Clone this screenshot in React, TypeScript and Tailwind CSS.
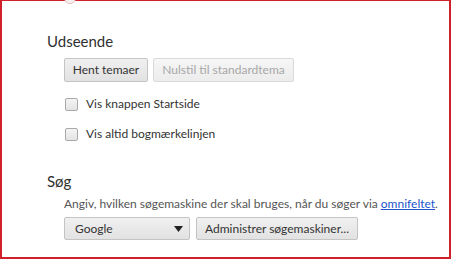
import React from "react";

const font = { fontFamily: '"Segoe UI", Lato, "Open Sans", sans-serif' };

function Checkbox({ label }: { label: string }) {
  return (
    <div className="flex items-center gap-[8px] h-[16px]">
      <div className="w-[13px] h-[13px] rounded-[2px] border border-[#a9a9a9] bg-gradient-to-b from-[#f4f4f4] to-[#e4e4e4]" />
      <span className="text-[12px] text-[#333]">{label}</span>
    </div>
  );
}

export default function App() {
  return (
    <div className="w-[452px] h-[260px] bg-white relative overflow-hidden" style={font}>
      <div className="absolute left-0 top-0 w-[451px] h-[259px] border-[2px] border-[#d0202a] border-t-[1.5px]" />
      <div className="absolute left-[64px] top-[-8px] w-[12px] h-[12px] rounded-full border border-[#e8c0c0] bg-[#f6f0f0]" />
      <div className="pl-[47px] pt-[32px]">
        <div className="text-[15px] text-[#303030] leading-[18px]">Udseende</div>
        <div className="pl-[17px] pt-[8px] flex gap-[5px]">
          <div className="w-[84px] h-[24px] flex items-center justify-center rounded-[2px] border border-[#c4c4c4] bg-gradient-to-b from-[#f0f0f0] to-[#e2e2e2] text-[12px] text-[#333] whitespace-nowrap">
            Hent temaer
          </div>
          <div className="w-[141px] h-[24px] flex items-center justify-center rounded-[2px] border border-[#dadada] bg-gradient-to-b from-[#f6f6f6] to-[#ececec] text-[12px] text-[#a8a8a8] whitespace-nowrap">
            Nulstil til standardtema
          </div>
        </div>
        <div className="pl-[18px] pt-[14px] flex flex-col gap-[14px]">
          <Checkbox label="Vis knappen Startside" />
          <Checkbox label="Vis altid bogmærkelinjen" />
        </div>
        <div className="pt-[30px] text-[15px] text-[#303030] leading-[18px]">Søg</div>
        <div className="pl-[17px] pt-[6px] text-[12px] text-[#555] leading-[16px] whitespace-nowrap">
          Angiv, hvilken søgemaskine der skal bruges, når du søger via{" "}
          <span className="text-[#2255cc] underline">omnifeltet</span>.
        </div>
        <div className="pl-[17px] pt-[5px] flex gap-[6px]">
          <div className="w-[126px] h-[23px] pl-[10px] pr-[6px] flex items-center justify-between rounded-[2px] border border-[#c4c4c4] bg-gradient-to-b from-[#f0f0f0] to-[#e2e2e2] text-[12px] text-[#333]">
            <span>Google</span>
            <svg width="9" height="6" viewBox="0 0 9 6"><path d="M0 0h9L4.5 6z" fill="#222" /></svg>
          </div>
          <div className="w-[162px] h-[23px] flex items-center justify-center rounded-[2px] border border-[#c4c4c4] bg-gradient-to-b from-[#f0f0f0] to-[#e2e2e2] text-[12px] text-[#333] whitespace-nowrap">
            Administrer søgemaskiner...
          </div>
        </div>
      </div>
    </div>
  );
}
